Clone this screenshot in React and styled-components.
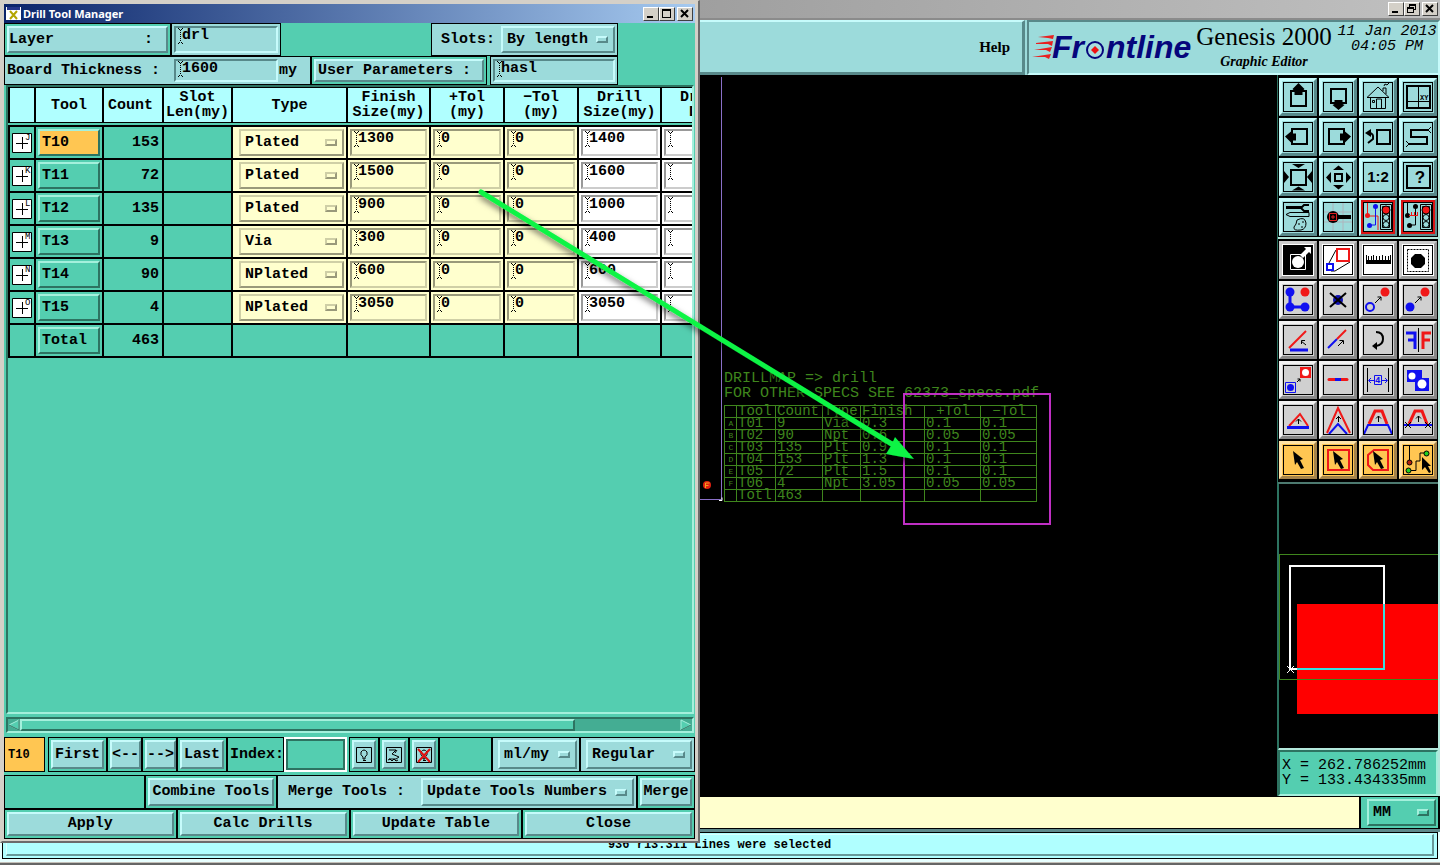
import React from "react";
import styled, { createGlobalStyle, css } from "styled-components";

const tones = {
  blue: { bg: "#9cdbdb", light: "#c6fbfb", dark: "#58898a" },
  teal: { bg: "#54ceb0", light: "#a4f0dc", dark: "#2d7361" },
  cream: { bg: "#ffffce", light: "#cfcfa6", dark: "#99997a" },
  white: { bg: "#ffffff", light: "#cccccc", dark: "#999999" },
  grey: { bg: "#d0d0d0", light: "#f2f2f2", dark: "#888888" },
  orange: { bg: "#ffc652", light: "#ffe3a6", dark: "#a5834a" },
  pale: { bg: "#b0ffff", light: "#d8ffff", dark: "#669999" },
};

const raised = css`
  background: ${(p) => tones[p.$tone || "blue"].bg};
  border-style: solid;
  border-width: 2px;
  border-color: ${(p) => {
    const t = tones[p.$tone || "blue"];
    return `${t.light} ${t.dark} ${t.dark} ${t.light}`;
  }};
`;

const sunken = css`
  background: ${(p) => tones[p.$tone || "blue"].bg};
  border-style: solid;
  border-width: 2px;
  border-color: ${(p) => {
    const t = tones[p.$tone || "blue"];
    return `${t.dark} ${t.light} ${t.light} ${t.dark}`;
  }};
`;

const Global = createGlobalStyle`
  * { box-sizing: border-box; }
  body { margin: 0; background: #000; }
  body, button, input, select {
    font: bold 15px/16px "Liberation Mono", monospace;
    color: #000;
  }
  button { padding: 0; margin: 0; cursor: pointer; }
  svg { display: block; flex: none; }
`;

/* ---------- main window ---------- */

const Desktop = styled.div`
  position: relative;
  display: flex;
  flex-direction: column;
  min-height: 100vh;
  overflow: hidden;
`;

const MainTitle = styled.div`
  display: flex;
  justify-content: flex-end;
  align-items: flex-start;
  height: 20px;
  padding: 2px 2px 0;
  background: linear-gradient(90deg, #808080, #c0c0c0);
  border-bottom: 2px solid #8b8b8b;
`;

const CaptionButtons = styled.div`
  display: flex;
  button:last-child { margin-left: 2px; }
`;

const CaptionButton = styled.button`
  width: 16px;
  height: 14px;
  background: #d4d0c8;
  border: 1px solid;
  border-color: #fff #404040 #404040 #fff;
`;

const Header = styled.header`
  display: flex;
  height: 55px;
  background: ${tones.blue.bg};
`;

const MenuArea = styled.nav`
  flex: 1;
  display: flex;
  justify-content: flex-end;
  align-items: center;
  padding-right: 12px;
  ${raised}
  border-right-width: 3px;
  border-bottom-width: 3px;
`;

const HelpButton = styled.button`
  border: 0;
  background: none;
  font: bold 15px/20px "Liberation Serif", serif;
`;

const Brand = styled.div`
  display: flex;
  width: 413px;
  padding-left: 3px;
  ${sunken}
  margin-left: 2px;
`;

const BrandText = styled.div`
  width: 140px;
  text-align: center;
  white-space: nowrap;
`;

const Product = styled.div`
  font: 25px/30px "Liberation Serif", serif;
`;

const Subtitle = styled.div`
  font: italic bold 14px/20px "Liberation Serif", serif;
`;

const Clock = styled.div`
  flex: 1;
  padding: 2px 0 0 2px;
  font: italic 15px/15px "Liberation Mono", monospace;
  text-align: center;
  white-space: pre;
`;

const Body = styled.main`
  flex: 1;
  display: flex;
`;

const Canvas = styled.div`
  flex: 1;
  position: relative;
  background: #000;
  overflow: hidden;
`;

const BoardEdge = styled.svg`
  position: absolute;
  left: 690px;
  top: 2px;
`;

const DrillMap = styled.div`
  position: absolute;
  left: 724px;
  top: 296px;
  color: #3f861d;
  font-weight: normal;
  white-space: pre;
  p { margin: 0; line-height: 15px; }
`;

const MapTable = styled.table`
  table-layout: fixed;
  width: 312px;
  margin-top: 4px;
  border-collapse: collapse;
  td, th {
    height: 12px;
    padding: 0 0 0 1px;
    border: 1px solid #3f861d;
    font: 14px/11px "Liberation Mono", monospace;
    text-align: left;
  }
  td:first-child { font-size: 8px; text-align: center; }
  th:nth-child(n + 6) { text-align: center; }
`;

const Highlight = styled.div`
  position: absolute;
  left: 903px;
  top: 318px;
  width: 148px;
  height: 132px;
  border: 2px solid #bf2fc4;
`;

const Sidebar = styled.aside`
  display: flex;
  flex-direction: column;
  width: 163px;
  border-left: 1px solid #2d7361;
  border-right: 2px solid #b4e8dc;
  background: #000;
`;

const ToolGrid = styled.div`
  display: grid;
  grid-template-columns: repeat(4, 38px);
  gap: 2px;
  padding: ${(p) => (p.$last ? "2px 0 3px 1px" : "3px 0 1px 1px")};
  border-bottom: 2px solid ${(p) => (p.$last ? "#4d7a70" : "#b4e8dc")};
`;

const ToolButton = styled.button`
  display: flex;
  align-items: center;
  justify-content: center;
  width: 38px;
  height: 38px;
  ${raised}
  border-width: 3px;
  svg {
    border: 1px solid #000;
    outline: ${(p) => (p.$alert ? "2px solid #d81414" : "0")};
  }
`;

const Preview = styled.div`
  flex: 1;
  border-left: 1px solid #2d7361;
  border-bottom: 2px solid #b4e8dc;
`;

const Coordinates = styled.div`
  padding: 6px 2px;
  ${sunken}
  font-size: 15px;
  line-height: 15px;
  font-weight: normal;
  white-space: pre;
`;

const CommandRow = styled.div`
  display: flex;
  height: 33px;
  padding: 1px 2px 1px 0;
  background: #000;
`;

const CommandInput = styled.input`
  flex: 1;
  border: 0;
  padding: 0 8px;
  background: ${tones.cream.bg};
  margin-right: 2px;
`;

const UnitPanel = styled.div`
  display: flex;
  width: 77px;
  padding: 2px 2px 2px 6px;
  background: ${tones.teal.bg};
`;

const StatusFrame = styled.footer`
  height: 36px;
  padding: 3px 2px 6px;
  background: linear-gradient(#5f8a8c 0 3px, #e8ffff 3px 33px, #c4c0b8 33px 34px, #666 34px);
`;

const Status = styled.div`
  height: 27px;
  border: 1px solid #000;
  background: ${tones.pale.bg};
  padding: 1px 3px 2px;
`;

const StatusText = styled.div`
  height: 22px;
  ${raised}
  border-width: 1px 2px 2px 1px;
  text-align: center;
  font-size: 12px;
  line-height: 20px;
`;

/* ---------- drill tool manager ---------- */

const Dialog = styled.section`
  position: absolute;
  left: 0;
  top: 0;
  display: flex;
  flex-direction: column;
  width: 700px;
  height: calc(100vh - 22px);
  min-height: 600px;
  padding: 3px 3px 2px 2px;
  border: 2px solid;
  border-color: #d4d0c8 #6b6b6b #6b6b6b #d4d0c8;
  border-width: 1px 2px 2px;
  background: #d4d0c8;
`;

const DialogTitle = styled.div`
  display: flex;
  align-items: center;
  gap: 2px;
  height: 19px;
  padding: 0 2px;
  color: #fff;
  background: linear-gradient(90deg, #0a246a, #a6caf0);
  h1 {
    flex: 1;
    margin: 0;
    font: bold 11px/18px "Noto Sans", sans-serif;
  }
`;

const DialogBody = styled.div`
  flex: 1;
  display: flex;
  flex-direction: column;
  background: ${tones.teal.bg};
`;

const Row = styled.div`
  display: flex;
  height: ${(p) => p.$h}px;
  margin-top: ${(p) => p.$mt || 0}px;
`;

const Spacer = styled.div`
  flex: ${(p) => (p.$w ? `0 0 ${p.$w}px` : 1)};
`;

const Box = styled.div`
  display: flex;
  align-items: center;
  flex: ${(p) => (p.$w ? `0 0 ${p.$w}px` : 1)};
  min-width: 0;
  padding: 2px;
  padding-left: ${(p) => p.$pl || 2}px;
  border: 1px solid #000;
  background: ${(p) => tones[p.$bg || "teal"].bg};
  white-space: pre;
`;

const PushButton = styled.button`
  flex: 1;
  align-self: stretch;
  display: flex;
  align-items: center;
  justify-content: ${(p) => (p.$left ? "flex-start" : "center")};
  white-space: pre;
  ${raised}
`;

const Label = styled.label`
  flex: 1;
  white-space: pre;
`;

const FieldFrame = styled.span`
  display: flex;
  align-items: flex-start;
  flex: ${(p) => (p.$w ? `0 0 ${p.$w}px` : 1)};
  align-self: stretch;
  height: ${(p) => (p.$cell ? "27px" : "auto")};
  min-width: 0;
  margin: ${(p) => (p.$cell ? "0 2px" : "0")};
  padding-left: 2px;
  ${sunken}
  input {
    flex: 1;
    width: 10px;
    min-width: 0;
    height: 16px;
    margin-left: -1px;
    padding: 0;
    border: 0;
    outline: 0;
    background: transparent;
  }
`;

const SelectFrame = styled.span`
  display: flex;
  align-items: center;
  flex: ${(p) => (p.$w ? `0 0 ${p.$w}px` : 1)};
  height: ${(p) => (p.$cell ? "27px" : "auto")};
  align-self: stretch;
  margin: ${(p) => (p.$cell ? "0 2px 0 6px" : "0")};
  padding: 0 5px 0 4px;
  ${raised}
  select {
    flex: 1;
    min-width: 0;
    appearance: none;
    border: 0;
    outline: 0;
    padding: 0;
    background: transparent;
  }
`;

const Notch = styled.span`
  flex: none;
  width: 12px;
  height: 7px;
  ${raised}
`;

const TableView = styled.div`
  flex: 1;
  margin: 0 1px 0 2px;
  overflow: hidden;
  ${sunken}
`;

const ToolTable = styled.table`
  table-layout: fixed;
  width: 737px;
  border-collapse: separate;
  border-spacing: 0;
  background: ${tones.teal.bg};
  th {
    height: 36px;
    padding: 0;
    border: solid #000;
    border-width: 1px 2px 1px 0;
    background: ${tones.pale.bg};
    line-height: 15px;
    white-space: pre-line;
  }
  th:nth-child(3) { text-align: left; padding-left: 4px; }
  th:first-child { border-left-width: 2px; }
  tbody::before { content: ""; display: table-row; height: 2px; }
  td {
    height: 33px;
    padding: 0;
    border: solid #000;
    border-width: 0 2px 2px 0;
  }
  td:first-child { border-left-width: 2px; }
  td:first-child svg { margin: 0 2px; }
  tbody tr:first-child td { border-top-width: 2px; height: 35px; }
`;

const Td = styled.td`
  background: ${(p) => tones[p.$bg || "teal"].bg};
  text-align: ${(p) => p.$align || "left"};
  ${(p) => p.$align === "right" && "&& { padding-right: 3px; }"}
`;

const CellButton = styled.button`
  display: block;
  width: 62px;
  height: 27px;
  margin-left: 2px;
  padding-left: 2px;
  text-align: left;
  ${raised}
  border-color: ${tones.teal.light} ${tones.teal.dark} ${tones.teal.dark} ${tones.teal.light};
`;

const ScrollTrack = styled.div`
  display: flex;
  align-items: stretch;
  height: 16px;
  margin: 3px 1px 4px 2px;
  ${sunken}
  background: #44ad93;
`;

const ScrollArrow = styled.button`
  width: 12px;
  border: 0;
  background: none;
`;

const Thumb = styled.div`
  width: 555px;
  margin-right: auto;
  ${raised}
`;

const Current = styled.output`
  display: flex;
  align-items: center;
  width: 41px;
  padding-left: 3px;
  border: 1px solid #000;
  background: ${tones.orange.bg};
  font-size: 12px;
`;

const IndexInput = styled.input`
  width: 63px;
  border: 2px solid #fff;
  outline: 2px solid ${tones.teal.dark};
  outline-offset: -4px;
  background: ${tones.teal.bg};
`;

const Annotation = styled.svg`
  position: absolute;
  left: 0;
  top: 0;
  pointer-events: none;
`;

/* ---------- small drawings ---------- */

const IBeam = () => (
  <svg width="5" height="16" viewBox="0 0 5 16" shapeRendering="crispEdges" aria-hidden="true">
    <path d="M2.500 2V14" stroke="#000" strokeDasharray="1 1" />
    <path d="M0 .5h1M4 .5h1M1 1.500h1M3 1.500h1M1 14.500h1M3 14.500h1M0 15.500h1M4 15.500h1" stroke="#000" />
  </svg>
);

const Caption = ({ kind }) => (
  <CaptionButton aria-label={kind}>
    <svg width="14" height="12" viewBox="0 0 14 12" fill="none" stroke="#000" shapeRendering="crispEdges">
      {kind === "Minimize" && <path d="M3 9h6" strokeWidth="2" />}
      {kind === "Maximize" && <path d="M2.500 1.500h8v8h-8zM2 2.500h9" />}
      {kind === "Restore" && <path d="M4.500 4V1.500h6v5H8M4 2.500h7M2.500 4.500h6v5h-6zM2 5.500h7" />}
      {kind === "Close" && <path d="M3 2l7 7M10 2l-7 7" strokeWidth="2" shapeRendering="auto" />}
    </svg>
  </CaptionButton>
);

const SymbolBox = ({ letter }) => (
  <svg width="20" height="20" viewBox="0 0 20 20" aria-hidden="true">
    <path d="M.5.5h19v19H.5z" fill="#fff" stroke="#000" />
    <path d="M4 10.500h12M10.500 4v12" stroke="#000" shapeRendering="crispEdges" />
    <text x="13" y="7" fontSize="9" fontWeight="normal">{letter}</text>
  </svg>
);

const Logo = () => (
  <svg width="162" height="51" viewBox="0 0 162 51" role="img" aria-label="Frontline">
    <g fill="#e82020">
      <path d="M6 15l16-2-1 4-5-1zM4 21l17-2-1 5-4-2-12 0zM2 28l18-3-2 5-4-2-12 0zM0 35l19-3-2 5-4-2-13 0z" />
    </g>
    <g fill="#06067c" fontFamily="Liberation Sans, sans-serif" fontWeight="bold" fontStyle="italic" fontSize="32">
      <text x="20" y="36">Fr</text>
      <text x="74" y="36">ntline</text>
    </g>
    <circle cx="63" cy="28" r="8" fill="#a8dede" stroke="#06067c" strokeWidth="2" />
    <path d="M63 24l4 4-4 4-4-4z" fill="#f01010" />
  </svg>
);

const R = "#f01818";
const B = "#1010f0";
const arrowUp = "M15.500 1l6 6-2 2v4h-8V9l-2-2z";
const pointer = "M10 6l10 8-3 1 4 8-3 1-4-7-2 3z";

const light = (wire, signal) => (
  <>
    {wire}
    <path d="M17.500 2.500h11v25h-11zM19.500 4.500h7v21h-7z" stroke="#000" fill="none" />
    <circle cx="23" cy="8" r="4" fill={signal} stroke="#000" />
    <circle cx="23" cy="15.500" r="3" fill="#9cdbdb" stroke="#000" />
    <circle cx="23" cy="22.500" r="3" fill="#9cdbdb" stroke="#000" />
  </>
);

const icons = {
  up: <><path d="M8 9h15v15H8z" fill="none" stroke="#000" strokeWidth="2" /><path d={arrowUp} /></>,
  down: <><path d="M8 7h15v14H8z" fill="none" stroke="#000" strokeWidth="2" /><path d="M11.500 18h8v4l2 1-6 5-6-5 2-1z" /></>,
  home: (
    <g fill="none" stroke="#000">
      <path d="M4 15.500L15 5l11 10.500zM7.500 15.500v11h15v-11M13.500 26V17h5v9M9.500 18.500h2v2h-2zM20 9V6h3v6M21 4l1-2 2 1 2-2" />
    </g>
  ),
  view: (
    <g fill="none" stroke="#000">
      <path d="M4 4h23v22H4z" strokeWidth="2" /><path d="M15.500 4v22M4 19.500h23" />
      <text x="17" y="18" fontSize="7" stroke="none" fill="#000">XY</text>
    </g>
  ),
  left: <><path d="M9 7h15v15H9z" fill="none" stroke="#000" strokeWidth="2" /><path d="M2 14.500l6-5 1 2h4v7H9l-1 2z" /></>,
  right: <><path d="M6 7h15v15H6z" fill="none" stroke="#000" strokeWidth="2" /><path d="M28 14.500l-6-5-1 2h-4v7h4l1 2z" /></>,
  back: <><path d="M14 8h13v14H14zM4 11h2q5 0 4 6l-5 4" fill="none" stroke="#000" strokeWidth="2" /><path d="M2 11l6-4v8z" /></>,
  snake: <><path d="M25 8H8v7h16v7H6" fill="none" stroke="#000" strokeWidth="2" /><path d="M25 8l3-3M25 8l3 3M6 22l-3-3M6 22l-3 3" stroke="#000" /></>,
  zoomOut: (
    <>
      <path d="M8 8h15v15H8z" fill="none" stroke="#000" strokeWidth="2" />
      <path d="M9 2h13l-6.500 4zM9 28.500l6.500-4 6.500 4zM1 9l5 6-5 6zM29 9l-5 6 5 6z" />
    </>
  ),
  zoomIn: <><path d="M12 12h7v7h-7z" fill="none" stroke="#000" strokeWidth="2" /><path d="M10 8l5.500-4.500L21 8zM10 23l5.500 4.500L21 23zM8 10l-5 5.500L8 21zM23 10l5 5.500-5 5.500z" /></>,
  ratio: <text x="15" y="20" fontSize="15" fontFamily="Liberation Sans, sans-serif" textAnchor="middle">1:2</text>,
  help: <><path d="M4 4h23v22H4z" fill="none" stroke="#000" strokeWidth="2" /><text x="17" y="21" fontSize="17" fontFamily="Liberation Sans, sans-serif" textAnchor="middle">?</text></>,
  kit: (
    <g fill="none" stroke="#000">
      <path d="M3 5.500h16" strokeWidth="3" /><path d="M26 3h-5l-3 3 3 3h5" strokeWidth="2" />
      <path d="M3 12.500l4-2h19v4H7zM14 18q8-4 9 3 0 6-5 7-8 1-7-3l2-3zM15 22h2M19 20h2M18 25h2" />
    </g>
  ),
  probe: (
    <>
      <path d="M10 0v30M20 0v30M0 10h30M0 20h30" stroke="#aeb4bc" />
      <path d="M15 15h13" stroke="#000" strokeWidth="4" /><circle cx="10" cy="15" r="6" />
      <path d="M6.500 11.500h7v7h-7zM9 14h2v2H9z" fill="none" stroke="#e02020" />
    </>
  ),
  lightA: light(<><path d="M4.500 0v14H15v14" fill="none" stroke={R} /><path d="M12.500 5v18h-5" fill="none" stroke={B} /><g fill={B}><circle cx="12.500" cy="4.500" r="2.500" /><circle cx="6.500" cy="23.500" r="2.500" /></g><circle cx="4.500" cy="13.500" r="2.500" fill={R} /></>, R),
  lightB: light(<><path d="M4.500 0v14M12.500 5v18h-5" fill="none" stroke="#000" /><circle cx="12.500" cy="4.500" r="2.500" /><circle cx="6.500" cy="23.500" r="2.500" /><circle cx="4.500" cy="13.500" r="2.500" /><path d="M6 13.500h8M8.500 10v4M11.500 10v4M14.500 10v4" stroke={R} /></>, R),
  resizeA: <><path d="M1 1h28v28H1z" /><path d="M7.500 9.500h15v15h-15z" fill="none" stroke="#fff" /><path d="M17 10l6-6-2-2h7v7l-2-2-6 6z" fill="#fff" /><circle cx="15" cy="17" r="6" fill="#fff" /></>,
  resizeB: <g fill="none"><path d="M6 18L13 5M8 26h4l15-9" stroke="#000" /><path d="M14 4h12v12H14z" stroke={R} strokeWidth="2" /><path d="M4 19h6v6H4z" stroke={B} strokeWidth="2" /></g>,
  ruler: <path d="M3 10v9h25v-9h-1v5h-1v-4h-1v4h-2v-4h-1v4h-2v-5h-1v5h-2v-4h-1v4h-2v-4h-1v4h-2v-5h-1v5H9v-4H8v4H6v-4H5v4H4v-5z" />,
  dot: <><path d="M4.500 4.500h21v22h-21z" fill="none" stroke="#000" strokeDasharray="2 1" /><path d="M12 9h6l4 4v6l-4 4h-6l-4-4v-6z" /></>,
  nodes: <><path d="M7 7v15h15" fill="none" stroke={B} strokeWidth="3" /><g fill={B}><circle cx="7" cy="7" r="4.500" /><circle cx="7" cy="22" r="4.500" /><circle cx="22" cy="22" r="4.500" /></g><circle cx="22" cy="7" r="4.500" fill={R} /></>,
  cross: <><circle cx="15" cy="15" r="5" fill="#1010b0" /><path d="M7 8l16 14M23 8L7 22" stroke="#000" strokeWidth="2" /></>,
  moveA: <><circle cx="22" cy="7" r="4.500" fill={R} /><circle cx="7" cy="22" r="4" fill="none" stroke={B} strokeWidth="2" /><path d="M12 18l6-6M14.500 12H18v3.500" fill="none" stroke="#000" /></>,
  moveB: <><circle cx="22" cy="7" r="4.500" fill={R} /><circle cx="7" cy="22" r="4.500" fill={B} /><path d="M12 18l6-6M14.500 12H18v3.500" fill="none" stroke="#000" /></>,
  angle: <><path d="M6 23L23 6" stroke={R} strokeWidth="2" /><path d="M7 25h18" stroke={B} strokeWidth="3" /><path d="M23 20l-5-4M18.500 19v-3.500h3.500" fill="none" stroke="#000" /></>,
  slant: <><path d="M5 23l9-9" stroke={B} strokeWidth="2" /><path d="M14 14l9-9" stroke={R} strokeWidth="2" /><path d="M15 21l5-5M16.500 15.500H20.500v3.500" fill="none" stroke="#000" /></>,
  rotate: <><path d="M13 7q7 0 7 7 0 6-7 7" fill="none" stroke="#000" strokeWidth="2" /><path d="M9 21l5-4v8z" /></>,
  mirror: <><path d="M15.500 3v24" stroke="#000" /><path d="M3 8h9v16M5 15h7" fill="none" stroke={B} strokeWidth="3" /><path d="M28 8h-8v16M27 15h-7" fill="none" stroke={R} strokeWidth="3" /></>,
  pads: <><path d="M17 2h11v11H17z" fill={R} /><circle cx="22.500" cy="7.500" r="3.500" fill="#fff" /><path d="M2.500 17.500h10v10h-10z" fill="none" stroke={B} /><circle cx="7.500" cy="22.500" r="3.500" fill={B} /><path d="M14 17l3-3M14.500 14H17v2.500" fill="none" stroke="#000" /></>,
  segment: <><path d="M6 14.500h18" stroke={R} strokeWidth="3" strokeLinecap="round" /><path d="M12 14.500h6" stroke={B} strokeWidth="3" /></>,
  gap: <><path d="M4.500 3v24M25.500 3v24" stroke="#000" /><path d="M6 15.500h6M18 15.500h6M8 13l-2.500 2.500L8 18M22 13l2.500 2.500L22 18M11.500 10.500h7v9h-7z" fill="none" stroke={B} /><text x="12" y="18" fontSize="9" fill={B}>4</text></>,
  merge: <><path d="M4 5h15v8h7v13H12v-9H4z" fill={B} /><circle cx="9" cy="11" r="3.500" fill="#fff" /><circle cx="19" cy="19" r="4.500" fill="#fff" /></>,
  triA: <><path d="M6 21L17 9l8 12" fill="none" stroke={R} strokeWidth="2" /><path d="M4 22.500h22" stroke={B} strokeWidth="3" /><path d="M15.500 19v-5M13 16.500l2.500-2.500L18 16.500" fill="none" stroke="#000" /></>,
  triB: <><path d="M4 28L15 3l12 25" fill="none" stroke={R} strokeWidth="2" /><path d="M6 29l9-10 9 10" fill="none" stroke={B} strokeWidth="2" /><path d="M15.500 17v-6M13 14l2.500-2.500L18 14" fill="none" stroke="#000" /></>,
  trapA: <><path d="M6 19l6-13h7l5 13" fill="none" stroke={R} strokeWidth="3" /><path d="M1 29l4-9h20l4 9" fill="none" stroke={B} strokeWidth="2" /><path d="M15.500 17v-6M13 13.500l2.500-2.500L18 13.500" fill="none" stroke="#000" /></>,
  trapB: <><path d="M6 19l6-13h7l5 13" fill="none" stroke={R} strokeWidth="3" /><path d="M0 20h30" stroke={B} strokeWidth="2" /><path d="M15.500 17v-6M13 13.500l2.500-2.500L18 13.500M2 17l6 6M8 17l-6 6M22 17l6 6M28 17l-6 6" fill="none" stroke="#000" /></>,
  pick: <path d={pointer} />,
  pickBox: <><path d="M5 5h21v20H5z" fill="none" stroke={R} strokeWidth="2" /><path d={pointer} /></>,
  pickPoly: <><path d="M11 5h14v20H10l-5-5V10z" fill="none" stroke={R} strokeWidth="2" /><path d={pointer} /></>,
  pickNet: <><path d="M6.500 1v16M6 25.500h7V16h4V8h6" fill="none" stroke="#000" /><circle cx="6.500" cy="17.500" r="2.500" fill="#b02010" stroke="#000" /><circle cx="5.500" cy="25.500" r="2.500" fill="#20d020" stroke="#000" /><circle cx="23.500" cy="8.500" r="2.500" fill="#20d020" stroke="#000" /><path d="M19 12l9 9h-3l3 6-2 1-4-6-3 3z" /></>,
};

const topTools = [
  "up", "down", "home", "view", "left", "right", "back", "snake",
  "zoomOut", "zoomIn", "ratio", "help", "kit", "probe", "lightA", "lightB",
];
const editTools = [
  "resizeA", "resizeB", "ruler", "dot", "nodes", "cross", "moveA", "moveB",
  "angle", "slant", "rotate", "mirror", "pads", "segment", "gap", "merge",
  "triA", "triB", "trapA", "trapB", "pick", "pickBox", "pickPoly", "pickNet",
];

const Tool = ({ name, tone }) => (
  <ToolButton $tone={tone} $alert={name.startsWith("light")} aria-label={name}>
    <svg width="30" height="30" viewBox="1 1 28 28">{icons[name]}</svg>
  </ToolButton>
);

const editTone = (i) => (i < 4 ? "white" : i < 20 ? "grey" : "orange");

const bulb = <path d="M8 13v-2q-3-2-2-5 3-4 6 0 1 3-2 5v2zM8 14.500h3" fill="none" stroke="#000" />;
const viewIcons = {
  Highlight: bulb,
  Outline: <path d="M4 4h7l-4 4 7 3-3 2H4M12 4l-2 3M3 14l2-1 2 2 2-2 2 2 2-1" fill="none" stroke="#000" />,
  "Clear highlight": <>{bulb}<path d="M3 3l12 13M15 3L3 16" stroke="#e01010" strokeWidth="2" /></>,
};

const IconBox = ({ name }) => (
  <Box $w={30}>
    <PushButton aria-label={name}>
      <svg width="16" height="16" viewBox="1 1 16 16">
        <path d="M1.500 1.500h15v15h-15z" fill="none" stroke="#000" />
        {viewIcons[name]}
      </svg>
    </PushButton>
  </Box>
);

/* ---------- controls ---------- */

const Field = ({ value, label, id, tone, w, cell }) => (
  <FieldFrame $tone={tone} $w={w} $cell={cell}>
    <IBeam />
    <input id={id} defaultValue={value} aria-label={id ? undefined : label} />
  </FieldFrame>
);

const Choice = ({ value, label, id, tone, w, cell }) => (
  <SelectFrame $tone={tone} $w={w} $cell={cell}>
    <select id={id} defaultValue={value} aria-label={id ? undefined : label}>
      <option>{value}</option>
    </select>
    <Notch $tone={tone} />
  </SelectFrame>
);

const columns = [28, 68, 60, 69, 115, 83, 74, 74, 83, 83];
const headings = [
  "", "Tool", "Count", "Slot\nLen(my)", "Type", "Finish\nSize(my)",
  "+Tol\n(my)", "−Tol\n(my)", "Drill\nSize(my)", "Drill\nDes",
];
const tools = [
  ["J", "T10", 153, "Plated", 1300, 1400],
  ["K", "T11", 72, "Plated", 1500, 1600],
  ["L", "T12", 135, "Plated", 900, 1000],
  ["M", "T13", 9, "Via", 300, 400],
  ["N", "T14", 90, "NPlated", 600, 600],
  ["O", "T15", 4, "NPlated", 3050, 3050],
];

const mapColumns = [12, 39, 47, 38, 64, 56, 56];
const mapRows = [
  ["A", "T01", "9", "Via", "0.3", "0.1", "0.1"],
  ["B", "T02", "90", "Npt", "0.6", "0.05", "0.05"],
  ["C", "T03", "135", "Plt", "0.9", "0.1", "0.1"],
  ["D", "T04", "153", "Plt", "1.3", "0.1", "0.1"],
  ["E", "T05", "72", "Plt", "1.5", "0.1", "0.1"],
  ["F", "T06", "4", "Npt", "3.05", "0.05", "0.05"],
  ["", "Totl", "463", "", "", "", ""],
];

function DrillToolManager() {
  return (
    <Dialog aria-label="Drill Tool Manager">
      <DialogTitle>
        <svg width="15" height="15" viewBox="0 0 15 15" aria-hidden="true">
          <path d="M0 1h15v13H0z" fill="#fff" />
          <path d="M1 1h13v3H1z" fill="#24368a" />
          <path d="M4 5l7 8M11 5l-7 8" stroke="#b3a500" strokeWidth="2" />
        </svg>
        <h1>Drill Tool Manager</h1>
        <CaptionButtons>
          <Caption kind="Minimize" />
          <Caption kind="Maximize" />
          <Caption kind="Close" />
        </CaptionButtons>
      </DialogTitle>
      <DialogBody>
        <Row $h={33}>
          <Box $w={167}><PushButton $left>{"Layer          :"}</PushButton></Box>
          <Box $w={110} $bg="blue"><Field value="drl" label="Layer" /></Box>
          <Spacer />
          <Box $w={187} $bg="blue" $pl={9}>
            <Label htmlFor="slots">Slots:</Label>
            <Choice id="slots" value="By length" w={114} />
          </Box>
          <Spacer $w={77} />
        </Row>
        <Row $h={29}>
          <Box $w={307} $bg="blue">
            <Label htmlFor="thickness">Board Thickness :</Label>
            <Field id="thickness" value="1600" w={104} />
            <Spacer $w={30}>&#8202;my</Spacer>
          </Box>
          <Box $w={176}><PushButton>User Parameters : </PushButton></Box>
          <Spacer $w={3} />
          <Box $w={128} $bg="blue"><Field value="hasl" label="User Parameters" /></Box>
        </Row>
        <TableView $tone="teal">
          <ToolTable>
            <colgroup>
              {columns.map((w, i) => <col key={i} width={w} />)}
            </colgroup>
            <thead>
              <tr>{headings.map((h, i) => <th key={i}>{h}</th>)}</tr>
            </thead>
            <tbody>
              {tools.map(([sym, name, count, type, finish, drill], i) => (
                <tr key={name}>
                  <Td><SymbolBox letter={sym} /></Td>
                  <Td><CellButton $tone={i === 0 ? "orange" : "teal"}>{name}</CellButton></Td>
                  <Td $align="right">{count}</Td>
                  <Td />
                  <Td $bg="cream"><Choice cell tone="cream" value={type} label={`${name} type`} /></Td>
                  <Td $bg="cream"><Field cell tone="cream" value={finish} label={`${name} finish size`} /></Td>
                  <Td $bg="cream"><Field cell tone="cream" value="0" label={`${name} plus tolerance`} /></Td>
                  <Td $bg="cream"><Field cell tone="cream" value="0" label={`${name} minus tolerance`} /></Td>
                  <Td $bg="white"><Field cell tone="white" value={drill} label={`${name} drill size`} /></Td>
                  <Td $bg="white"><Field cell tone="white" value="" label={`${name} designator`} /></Td>
                </tr>
              ))}
              <tr>
                <Td />
                <Td><CellButton $tone="teal">Total</CellButton></Td>
                <Td $align="right">463</Td>
                {columns.slice(3).map((_, i) => <Td key={i} />)}
              </tr>
            </tbody>
          </ToolTable>
        </TableView>
        <ScrollTrack $tone="teal">
          <ScrollArrow aria-label="Scroll left">
            <svg width="12" height="12" viewBox="0 0 12 12">
              <path d="M11 1L1 6l10 5z" fill="#54ceb0" stroke="#a4f0dc" />
              <path d="M1 6l10 5V1" fill="none" stroke="#2d7361" />
            </svg>
          </ScrollArrow>
          <Thumb $tone="teal" />
          <ScrollArrow aria-label="Scroll right">
            <svg width="12" height="12" viewBox="0 0 12 12">
              <path d="M1 1l10 5-10 5z" fill="#54ceb0" stroke="#a4f0dc" />
              <path d="M1 11l10-5" stroke="#2d7361" />
            </svg>
          </ScrollArrow>
        </ScrollTrack>
        <Row $h={35}>
          <Current>T10</Current>
          <Spacer $w={3} />
          <Box $w={59}><PushButton>First</PushButton></Box>
          <Box $w={35}><PushButton>&lt;--</PushButton></Box>
          <Box $w={35}><PushButton>--&gt;</PushButton></Box>
          <Box $w={50}><PushButton>Last</PushButton></Box>
          <Box $w={57} as="label" htmlFor="index">Index:</Box>
          <IndexInput id="index" />
          <Spacer $w={2} />
          <IconBox name="Highlight" />
          <IconBox name="Outline" />
          <IconBox name="Clear highlight" />
          <Box />
          <Box $w={88} $bg="blue" $pl={5}><Choice value="ml/my" label="Units" /></Box>
          <Box $w={115} $bg="blue" $pl={5}><Choice value="Regular" label="Mode" /></Box>
        </Row>
        <Row $h={34} $mt={3}>
          <Box />
          <Box $w={132}><PushButton>Combine Tools</PushButton></Box>
          <Box $w={360} $bg="blue" $pl={10}>
            <Label htmlFor="merge">Merge Tools :</Label>
            <Choice id="merge" value="Update Tools Numbers" w={213} />
          </Box>
          <Box $w={58}><PushButton>Merge</PushButton></Box>
        </Row>
        <Row $h={30}>
          <Box><PushButton>Apply</PushButton></Box>
          <Box><PushButton>Calc Drills</PushButton></Box>
          <Box><PushButton>Update Table</PushButton></Box>
          <Box><PushButton>Close</PushButton></Box>
        </Row>
      </DialogBody>
    </Dialog>
  );
}

export default function App() {
  return (
    <Desktop>
      <Global />
      <MainTitle>
        <CaptionButtons>
          <Caption kind="Minimize" />
          <Caption kind="Restore" />
          <Caption kind="Close" />
        </CaptionButtons>
      </MainTitle>
      <Header>
        <MenuArea><HelpButton>Help</HelpButton></MenuArea>
        <Brand>
          <Logo />
          <BrandText>
            <Product>Genesis 2000</Product>
            <Subtitle>Graphic Editor</Subtitle>
          </BrandText>
          <Clock>{"11 Jan 2013\n04:05 PM"}</Clock>
        </Brand>
      </Header>
      <Body>
        <Canvas>
          <BoardEdge width="34" height="426" viewBox="0 0 34 426">
            <path d="M31.500 0v422.500H0" fill="none" stroke="#8a70c8" />
            <path d="M29 423.500h3v-3" fill="none" stroke="#fff" />
            <circle cx="17" cy="408" r="4" fill="#e02010" />
            <path d="M15.500 411v-5h4M15.500 408.500h3" fill="none" stroke="#f0a020" />
          </BoardEdge>
          <DrillMap>
            <p>{"DRILLMAP => drill"}</p>
            <p>FOR OTHER SPECS SEE 62373_specs.pdf</p>
            <MapTable>
              <colgroup>{mapColumns.map((w, i) => <col key={i} width={w} />)}</colgroup>
              <thead>
                <tr>
                  {["", "Tool", "Count", "Type", "Finish", "+Tol", "−Tol"].map((h, i) => <th key={i}>{h}</th>)}
                </tr>
              </thead>
              <tbody>
                {mapRows.map((r, i) => (
                  <tr key={i}>{r.map((c, j) => <td key={j}>{c}</td>)}</tr>
                ))}
              </tbody>
            </MapTable>
          </DrillMap>
          <Highlight />
        </Canvas>
        <Sidebar>
          <ToolGrid>
            {topTools.map((n) => <Tool key={n} name={n} tone="blue" />)}
          </ToolGrid>
          <ToolGrid $last>
            {editTools.map((n, i) => <Tool key={n} name={n} tone={editTone(i)} />)}
          </ToolGrid>
          <Preview>
            <svg width="100%" height="264" viewBox="0 0 159 264" preserveAspectRatio="xMinYMin slice">
              <path d="M18 120h141v110H18z" fill="#f00" />
              <path d="M0 70.500h159M.5 70v125.500H159" fill="none" stroke="#3f861d" />
              <path d="M105 82H11v103h7M105 81v39" fill="none" stroke="#fff" strokeWidth="2" />
              <path d="M18 185h87v-65" fill="none" stroke="#38e0e0" strokeWidth="2" />
              <path d="M8 182l7 7M15 182l-7 7" stroke="#fff" />
            </svg>
          </Preview>
          <Coordinates $tone="teal">{"X = 262.786252mm\nY = 133.434335mm"}</Coordinates>
        </Sidebar>
      </Body>
      <CommandRow>
        <CommandInput aria-label="Command" />
        <UnitPanel><Choice tone="teal" value="MM" label="Measurement unit" /></UnitPanel>
      </CommandRow>
      <StatusFrame>
        <Status><StatusText $tone="pale">936 r13.311 Lines were selected</StatusText></Status>
      </StatusFrame>
      <DrillToolManager />
      <Annotation width="930" height="480" viewBox="0 0 930 480" aria-hidden="true">
        <defs>
          <filter id="soft" x="-10%" y="-10%" width="120%" height="120%">
            <feDropShadow dx="1" dy="4" stdDeviation="3" floodColor="#000" floodOpacity="0.6" />
          </filter>
        </defs>
        <g filter="url(#soft)">
          <path d="M481 192L895 446" stroke="#0cf444" strokeWidth="5" strokeLinecap="round" />
          <path d="M914 459l-28-5 5-8 4-9z" fill="#0cf444" />
        </g>
      </Annotation>
    </Desktop>
  );
}
